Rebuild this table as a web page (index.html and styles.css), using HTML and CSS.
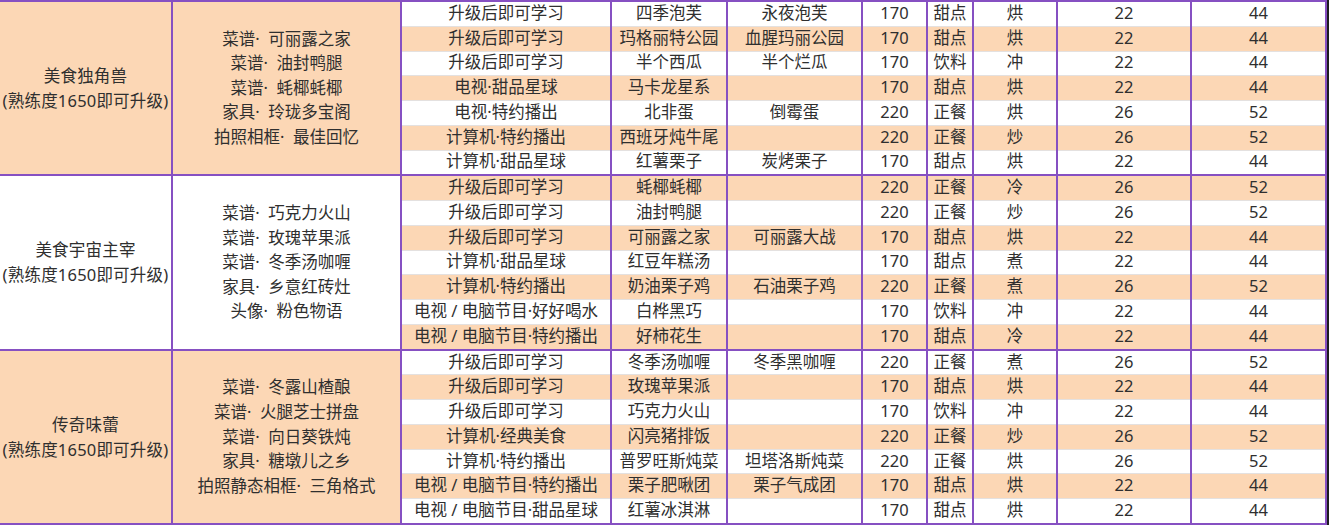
FILE: index.html
```html
<!DOCTYPE html>
<html lang="zh-CN">
<head>
<meta charset="utf-8">
<title>美食升级表</title>
<link rel="stylesheet" href="styles.css">
</head>
<body>
<table class="sheet">
  <colgroup>
    <col class="c1"><col class="c2"><col class="c3"><col class="c4"><col class="c5">
    <col class="c6"><col class="c7"><col class="c8"><col class="c9"><col class="c10">
  </colgroup>
  <tbody>
    <tr class="gs">
      <td class="grp name peach" rowspan="7"><div class="title">美食独角兽<br>(熟练度1650即可升级)</div></td>
      <td class="grp list peach" rowspan="7"><div class="items">菜谱·&nbsp; 可丽露之家<br>菜谱·&nbsp; 油封鸭腿<br>菜谱·&nbsp; 蚝椰蚝椰<br>家具·&nbsp; 玲珑多宝阁<br>拍照相框·&nbsp; 最佳回忆</div></td>
      <td>升级后即可学习</td><td>四季泡芙</td><td>永夜泡芙</td><td>170</td><td>甜点</td><td>烘</td><td>22</td><td>44</td>
    </tr>
    <tr class="alt"><td>升级后即可学习</td><td>玛格丽特公园</td><td>血腥玛丽公园</td><td>170</td><td>甜点</td><td>烘</td><td>22</td><td>44</td></tr>
    <tr><td>升级后即可学习</td><td>半个西瓜</td><td>半个烂瓜</td><td>170</td><td>饮料</td><td>冲</td><td>22</td><td>44</td></tr>
    <tr class="alt"><td>电视·甜品星球</td><td>马卡龙星系</td><td></td><td>170</td><td>甜点</td><td>烘</td><td>22</td><td>44</td></tr>
    <tr><td>电视·特约播出</td><td>北非蛋</td><td>倒霉蛋</td><td>220</td><td>正餐</td><td>烘</td><td>26</td><td>52</td></tr>
    <tr class="alt"><td>计算机·特约播出</td><td>西班牙炖牛尾</td><td></td><td>220</td><td>正餐</td><td>炒</td><td>26</td><td>52</td></tr>
    <tr><td>计算机·甜品星球</td><td>红薯栗子</td><td>炭烤栗子</td><td>170</td><td>甜点</td><td>烘</td><td>22</td><td>44</td></tr>

    <tr class="gs alt">
      <td class="grp name white" rowspan="7"><div class="title">美食宇宙主宰<br>(熟练度1650即可升级)</div></td>
      <td class="grp list white" rowspan="7"><div class="items">菜谱·&nbsp; 巧克力火山<br>菜谱·&nbsp; 玫瑰苹果派<br>菜谱·&nbsp; 冬季汤咖喱<br>家具·&nbsp; 乡意红砖灶<br>头像·&nbsp; 粉色物语</div></td>
      <td>升级后即可学习</td><td>蚝椰蚝椰</td><td></td><td>220</td><td>正餐</td><td>冷</td><td>26</td><td>52</td>
    </tr>
    <tr><td>升级后即可学习</td><td>油封鸭腿</td><td></td><td>220</td><td>正餐</td><td>炒</td><td>26</td><td>52</td></tr>
    <tr class="alt"><td>升级后即可学习</td><td>可丽露之家</td><td>可丽露大战</td><td>170</td><td>甜点</td><td>烘</td><td>22</td><td>44</td></tr>
    <tr><td>计算机·甜品星球</td><td>红豆年糕汤</td><td></td><td>170</td><td>甜点</td><td>煮</td><td>22</td><td>44</td></tr>
    <tr class="alt"><td>计算机·特约播出</td><td>奶油栗子鸡</td><td>石油栗子鸡</td><td>220</td><td>正餐</td><td>煮</td><td>26</td><td>52</td></tr>
    <tr><td>电视 / 电脑节目·好好喝水</td><td>白桦黑巧</td><td></td><td>170</td><td>饮料</td><td>冲</td><td>22</td><td>44</td></tr>
    <tr class="alt"><td>电视 / 电脑节目·特约播出</td><td>好柿花生</td><td></td><td>170</td><td>甜点</td><td>冷</td><td>22</td><td>44</td></tr>

    <tr class="gs">
      <td class="grp name peach" rowspan="7"><div class="title">传奇味蕾<br>(熟练度1650即可升级)</div></td>
      <td class="grp list peach" rowspan="7"><div class="items">菜谱·&nbsp; 冬露山楂酿<br>菜谱·&nbsp; 火腿芝士拼盘<br>菜谱·&nbsp; 向日葵铁炖<br>家具·&nbsp; 糖墩儿之乡<br>拍照静态相框·&nbsp; 三角格式</div></td>
      <td>升级后即可学习</td><td>冬季汤咖喱</td><td>冬季黑咖喱</td><td>220</td><td>正餐</td><td>煮</td><td>26</td><td>52</td>
    </tr>
    <tr class="alt"><td>升级后即可学习</td><td>玫瑰苹果派</td><td></td><td>170</td><td>甜点</td><td>烘</td><td>22</td><td>44</td></tr>
    <tr><td>升级后即可学习</td><td>巧克力火山</td><td></td><td>170</td><td>饮料</td><td>冲</td><td>22</td><td>44</td></tr>
    <tr class="alt"><td>计算机·经典美食</td><td>闪亮猪排饭</td><td></td><td>220</td><td>正餐</td><td>炒</td><td>26</td><td>52</td></tr>
    <tr><td>计算机·特约播出</td><td>普罗旺斯炖菜</td><td>坦塔洛斯炖菜</td><td>220</td><td>正餐</td><td>烘</td><td>26</td><td>52</td></tr>
    <tr class="alt"><td>电视 / 电脑节目·特约播出</td><td>栗子肥啾团</td><td>栗子气成团</td><td>170</td><td>甜点</td><td>烘</td><td>22</td><td>44</td></tr>
    <tr class="last"><td>电视 / 电脑节目·甜品星球</td><td>红薯冰淇淋</td><td></td><td>170</td><td>甜点</td><td>烘</td><td>22</td><td>44</td></tr>
  </tbody>
</table>
</body>
</html>
```

FILE: styles.css
```css
html, body {
  margin: 0;
  padding: 0;
  background: #1d1d1f;
}

.sheet {
  border-collapse: collapse;
  table-layout: fixed;
  width: 1326px;
  height: 525px;
  background: #ffffff;
  font-family: "Noto Sans", "Noto Sans CJK SC", sans-serif;
  font-size: 16.5px;
  color: #2f2f2f;
}

.c1 { width: 172px; }
.c2 { width: 229px; }
.c3 { width: 210px; }
.c4 { width: 116px; }
.c5 { width: 135px; }
.c6 { width: 65px; }
.c7 { width: 46px; }
.c8 { width: 84px; }
.c9 { width: 134px; }
.c10 { width: 135px; }

.sheet td {
  padding: 0 0 2px;
  text-align: center;
  vertical-align: middle;
  white-space: nowrap;
  line-height: 20px;
  border-left: 2px solid #8650c2;
  border-right: 2px solid #8650c2;
  border-bottom: 1px solid #e4e1e0;
  background: #ffffff;
}

.sheet tr.alt td {
  background: #fcd7b5;
}

.sheet tr.gs td {
  border-top: 2px solid #8650c2;
}

.sheet tr.last td,
.sheet td.grp {
  border-bottom: 2px solid #8650c2;
}

.sheet td.name {
  border-left: none;
  padding: 0;
}

.sheet td.list {
  padding: 0;
}

.sheet tr td.grp.peach { background: #fcd7b5; }
.sheet tr td.grp.white { background: #ffffff; }

.title {
  line-height: 25px;
  letter-spacing: 0.2px;
}

.items {
  line-height: 24.6px;
}
```
